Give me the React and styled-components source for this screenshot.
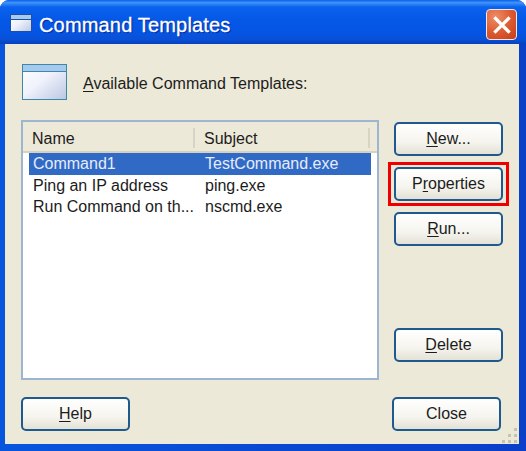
import React from 'react';
import styled, { createGlobalStyle } from 'styled-components';

const GlobalStyle = createGlobalStyle`
  html, body { margin: 0; padding: 0; background: #fff; }
  body { font-family: "Liberation Sans", Arial, sans-serif; }
`;

const Window = styled.div`
  position: relative;
  width: 526px;
  height: 451px;
  box-sizing: border-box;
  display: flex;
  flex-direction: column;
  overflow: hidden;
  border-radius: 9px 9px 0 0;
  background: #0831d9;
`;
const TitleBar = styled.div`
  height: 44px;
  flex: none;
  box-sizing: border-box;
  display: flex;
  align-items: center;
  padding: 5px 9px 0 10px;
  gap: 7px;
  background: linear-gradient(180deg, #0a5fe8 0%, #3f94fb 6%, #0a62ee 16%, #0558e6 45%, #0555e4 75%, #0a4fd4 90%, #0340c0 100%);

  & > svg {
    margin-top: -3px;
  }
`;
const TitleText = styled.div`
  flex: 1;
  color: #fff;
  font-size: 20px;
  letter-spacing: 0.17px;
  padding-top: 2px;
  text-shadow: 1px 1px 1px #0a1f8f;
  -webkit-text-stroke: 0.3px #fff;
`;
const CloseBox = styled.div`
  width: 31px;
  height: 31px;
  box-sizing: border-box;
  display: flex;
  align-items: center;
  justify-content: center;
  border: 1px solid #f3e7e2;
  border-radius: 4px;
  background: radial-gradient(circle at 30% 25%, #ee8e68 0%, #dd5c32 50%, #c43c18 100%);
`;
const Frame = styled.div`
  flex: 1;
  display: flex;
  min-height: 0;
  padding: 0 7px 7px 5px;
  background: linear-gradient(90deg, #0855dd 0, #0855dd 3px, #0a3fc8 100%);
`;
const Body = styled.div`
  flex: 1;
  min-width: 0;
  box-sizing: border-box;
  display: flex;
  flex-direction: column;
  padding: 20px 16px 13px 16px;
  background: #ece9d8;
  color: #1c1c1c;
  font-size: 16px;
`;
const Heading = styled.div`
  height: 36px;
  display: flex;
  align-items: center;
  gap: 16px;
  margin-left: 1px;
`;
const HeadingLabel = styled.div`
  padding-top: 4px;
`;
const Key = styled.span`
  text-decoration: underline;
  text-underline-offset: 2px;
`;
const Middle = styled.div`
  flex: 1;
  display: flex;
  gap: 15px;
  margin-top: 20px;
`;
const ListBox = styled.div`
  width: 358px;
  height: 260px;
  flex: none;
  box-sizing: border-box;
  border: 2px solid #9db5d0;
  background: #fff;
`;
const ListHeader = styled.div`
  height: 31px;
  box-sizing: border-box;
  display: grid;
  grid-template-columns: 172px 175px 1fr;
  align-items: end;
  padding-bottom: 3px;
  background: #ece9d8;
  border-bottom: 2px solid #d6d2c2;
`;
const HeaderCell = styled.div`
  height: 20px;
  line-height: 22px;
  box-sizing: border-box;
  padding-left: 9px;
  border-right: 2px solid #d8d4c4;
`;
const Row = styled.div`
  display: grid;
  grid-template-columns: 172px 1fr;
  height: ${p => (p.$selected ? 22 : 21)}px;
  line-height: 21px;
  margin: 0 6px 0 6px;
  padding-left: 4px;
  white-space: nowrap;
  color: ${p => (p.$selected ? '#e6ecfa' : '#1c1c1c')};
  background: ${p => (p.$selected ? '#316ac5' : 'transparent')};
`;
const Side = styled.div`
  width: 109px;
  flex: none;
  display: flex;
  flex-direction: column;
  padding-top: 2px;
`;
const Highlight = styled.div`
  margin: 6px -6px;
  padding: 2px 3px;
  border: 3px solid #ee0000;
`;
const Spacer = styled.div`
  height: 82px;
`;
const Button = styled.div`
  width: 109px;
  height: 34px;
  box-sizing: border-box;
  flex: none;
  display: flex;
  align-items: center;
  justify-content: center;
  border: 2px solid #1f5a8f;
  border-radius: 5px;
  background: linear-gradient(180deg, #ffffff 0%, #f5f4ee 60%, #e4e1d5 100%);
`;
const Footer = styled.div`
  display: flex;
  justify-content: space-between;
  padding-right: 2px;
`;
const ResizeGrip = styled.svg`
  position: absolute;
  left: 500px;
  top: 426px;
`;

const WindowIcon = ({ w, h, bar, stroke }) => (
  <svg width={w} height={h} viewBox={`0 0 ${w} ${h}`}>
    <defs>
      <linearGradient id={`pane${w}`} x1="0" y1="0" x2="1" y2="1">
        <stop offset="0" stopColor="#ffffff" />
        <stop offset="0.45" stopColor="#f0f2fc" />
        <stop offset="1" stopColor="#b9c6e2" />
      </linearGradient>
    </defs>
    <rect x="0.5" y="0.5" width={w - 1} height={h - 1} fill={`url(#pane${w})`} stroke={stroke} />
    <rect x="1" y="1" width={w - 2} height={bar} fill="#a6c9ee" />
    <rect x="1" y={bar + 1} width={w - 2} height="1" fill={stroke} />
  </svg>
);

const CloseIcon = () => (
  <svg width="18" height="18" viewBox="0 0 18 18">
    <path d="M2.5 2.5 L15.5 15.5 M15.5 2.5 L2.5 15.5" stroke="#fff" strokeWidth="3.2" strokeLinecap="square" />
  </svg>
);

const Grip = () => (
  <ResizeGrip width="20" height="20" viewBox="0 0 20 20">
    {[[14, 2], [8, 8], [14, 8], [2, 14], [8, 14], [14, 14]].map(([x, y]) => (
      <rect key={`${x}-${y}`} x={x} y={y} width="3" height="3" fill="#c6c3b2" />
    ))}
  </ResizeGrip>
);

const rows = [
  { name: 'Command1', subject: 'TestCommand.exe', selected: true },
  { name: 'Ping an IP address', subject: 'ping.exe' },
  { name: 'Run Command on th...', subject: 'nscmd.exe' },
];

export default function App() {
  return (
    <>
      <GlobalStyle />
      <Window>
        <TitleBar>
          <WindowIcon w={22} h={18} bar={4} stroke="#1c4fa8" />
          <TitleText>Command Templates</TitleText>
          <CloseBox>
            <CloseIcon />
          </CloseBox>
        </TitleBar>
        <Frame>
          <Body>
            <Heading>
              <WindowIcon w={45} h={36} bar={6} stroke="#3f87a8" />
              <HeadingLabel><Key>A</Key>vailable Command Templates:</HeadingLabel>
            </Heading>
            <Middle>
              <ListBox>
                <ListHeader>
                  <HeaderCell>Name</HeaderCell>
                  <HeaderCell>Subject</HeaderCell>
                </ListHeader>
                {rows.map(row => (
                  <Row key={row.name} $selected={row.selected}>
                    <div>{row.name}</div>
                    <div>{row.subject}</div>
                  </Row>
                ))}
              </ListBox>
              <Side>
                <Button><span><Key>N</Key>ew...</span></Button>
                <Highlight>
                  <Button><span>P<Key>r</Key>operties</span></Button>
                </Highlight>
                <Button><span><Key>R</Key>un...</span></Button>
                <Spacer />
                <Button><span><Key>D</Key>elete</span></Button>
              </Side>
            </Middle>
            <Footer>
              <Button><span><Key>H</Key>elp</span></Button>
              <Button>Close</Button>
            </Footer>
          </Body>
        </Frame>
        <Grip />
      </Window>
    </>
  );
}
